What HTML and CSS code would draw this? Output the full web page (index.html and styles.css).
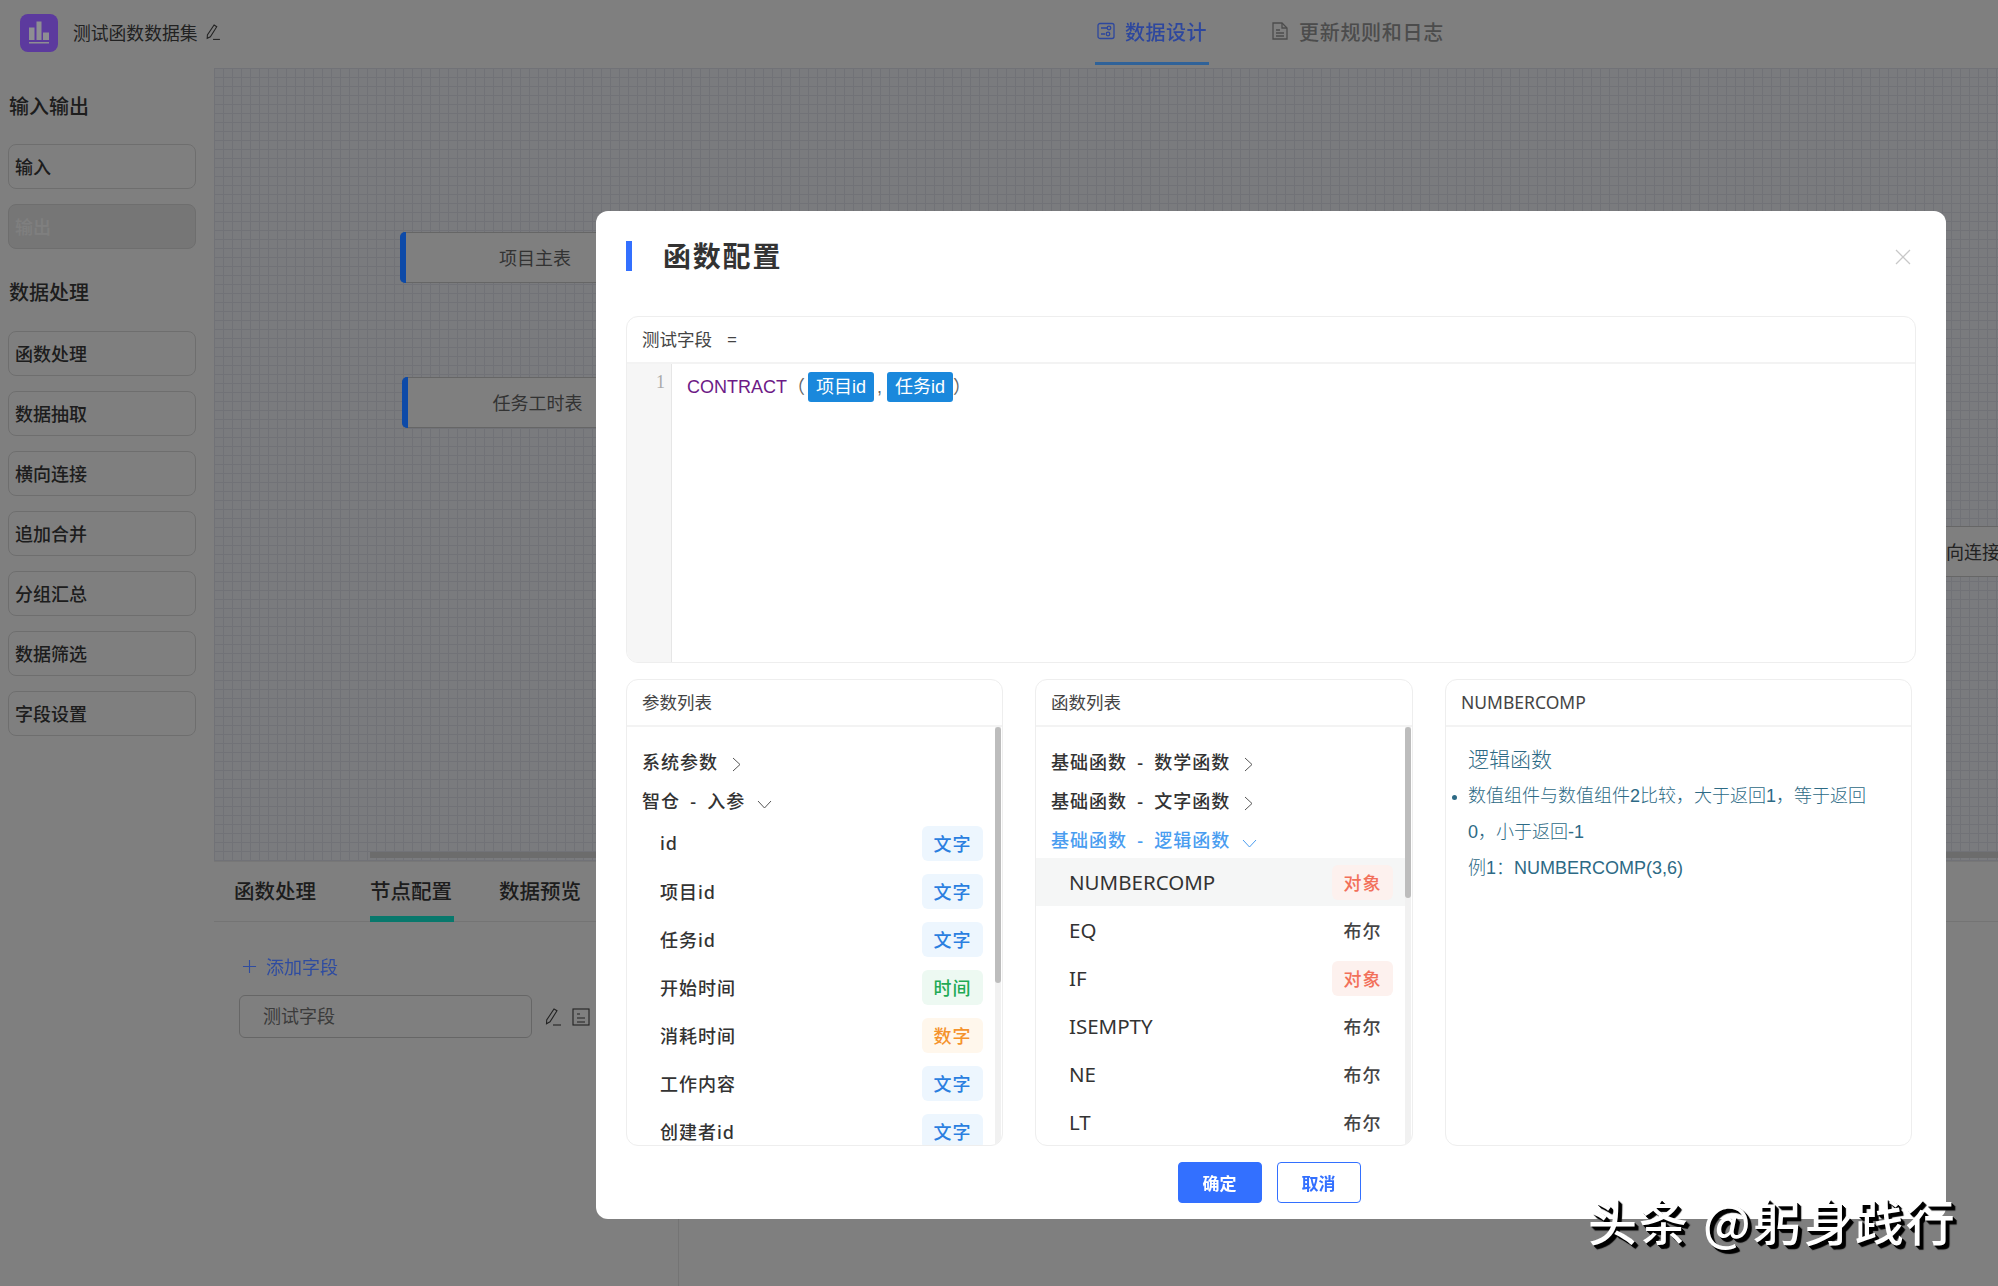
FILE: index.html
```html
<!DOCTYPE html>
<html>
<head>
    <title>函数配置</title>
    <meta charset="utf-8">
    <link rel="stylesheet" href="styles.css">
</head>
<body>
    <div class="app">
        <div class="topbar">
            <div class="brand">
                <svg class="logo" viewBox="0 0 38 38">
                    <rect width="38" height="38" rx="8" fill="#5c3a9e"/>
                    <path d="M9 13.500h5.500V26H9zM16.500 7.500h5V26h-5zM23 18.500h6V26h-6z" fill="#8e8e92"/>
                    <rect x="9" y="28" width="20" height="1.500" fill="#8e8e92"/>
                </svg>
                <span class="brand-name">测试函数数据集</span>
                <svg class="pencil" viewBox="0 0 16 16" fill="none" stroke="#444" stroke-width="1">
                    <path d="M9.500 1l2.500 1.600-6 9.400-3 1.500.2-3.300z"/>
                    <path d="M8.500 14.500h6.500"/>
                </svg>
            </div>
            <div class="nav">
                <div class="nav-tab active">
                    <svg viewBox="0 0 18 18" fill="none" stroke="#2d479e" stroke-width="1.300">
                        <rect x="1" y="1.500" width="16" height="15" rx="2"/>
                        <path d="M4 6h6M8 12h-4"/>
                        <circle cx="12" cy="6" r="1.800"/>
                        <circle cx="11" cy="12" r="1.800"/>
                    </svg>
                    <span>数据设计</span>
                </div>
                <div class="nav-tab second">
                    <svg viewBox="0 0 18 18" fill="none" stroke="#999" stroke-width="1.300">
                        <path d="M2 1h9l5 5v11H2z"/>
                        <path d="M11 1v5h5M5 8h4M5 11h8M5 14h8"/>
                    </svg>
                    <span>更新规则和日志</span>
                </div>
            </div>
        </div>

        <div class="main">
            <div class="sidebar">
                <h4>输入输出</h4>
                <div class="side-item">输入</div>
                <div class="side-item disabled">输出</div>
                <h4>数据处理</h4>
                <div class="side-item">函数处理</div>
                <div class="side-item">数据抽取</div>
                <div class="side-item">横向连接</div>
                <div class="side-item">追加合并</div>
                <div class="side-item">分组汇总</div>
                <div class="side-item">数据筛选</div>
                <div class="side-item">字段设置</div>
            </div>

            <div class="work">
                <div class="canvas">
                    <div class="node node1">项目主表</div>
                    <div class="node node2">任务工时表</div>
                    <div class="node node3">横向连接</div>
                    <div class="canvas-scroll"></div>
                </div>
                <div class="panel">
                    <div class="panel-tabs">
                        <div class="panel-tab">函数处理</div>
                        <div class="panel-tab active">节点配置</div>
                        <div class="panel-tab">数据预览</div>
                    </div>
                    <div class="panel-body">
                        <div class="add-field">
                            <svg viewBox="0 0 16 16" stroke="#2f4ca0" stroke-width="1.200"><path d="M8 1v14M1 8h14"/></svg>
                            <span>添加字段</span>
                        </div>
                        <div class="field-row">
                            <div class="field-input">测试字段</div>
                            <svg class="field-icon" viewBox="0 0 18 18" fill="none" stroke="#444" stroke-width="1.100">
                                <path d="M11 1l3 1.800-7 11-3.500 2 .2-3.800z"/>
                                <path d="M10 17h8"/>
                            </svg>
                            <svg class="field-icon" viewBox="0 0 18 18" fill="none" stroke="#444" stroke-width="1.100">
                                <rect x="1" y="1" width="16" height="16"/>
                                <path d="M5 6h3M5 10h8M5 14h8"/>
                            </svg>
                        </div>
                    </div>
                </div>
            </div>
        </div>
    </div>

    <div class="mask">
        <div class="modal">
            <div class="modal-head">
                <span class="modal-bar"></span>
                <span class="modal-title">函数配置</span>
                <svg class="modal-close" viewBox="0 0 16 16" stroke="#c8c8c8" stroke-width="1.300"><path d="M1 1l14 14M15 1L1 15"/></svg>
            </div>

            <div class="formula">
                <div class="formula-head">测试字段<span class="equals">=</span></div>
                <div class="formula-body">
                    <div class="gutter">1</div>
                    <div class="code"><span class="fn-name">CONTRACT</span>（<span class="pill first">项目id</span><span class="comma">,</span><span class="pill">任务id</span>）</div>
                </div>
            </div>

            <div class="columns">
                <div class="card params">
                    <div class="card-head">参数列表</div>
                    <div class="card-body">
                        <div class="list">
                            <div class="group">系统参数<svg class="chev" viewBox="0 0 9 15" fill="none" stroke="#555"><path d="M1 1l7 6.500L1 14"/></svg></div>
                            <div class="group">智仓 - 入参<svg class="chev-down" viewBox="0 0 15 9" fill="none" stroke="#555"><path d="M1 1l6.500 7L14 1"/></svg></div>
                            <div class="row"><span>id</span><span class="tag text">文字</span></div>
                            <div class="row"><span>项目id</span><span class="tag text">文字</span></div>
                            <div class="row"><span>任务id</span><span class="tag text">文字</span></div>
                            <div class="row"><span>开始时间</span><span class="tag time">时间</span></div>
                            <div class="row"><span>消耗时间</span><span class="tag num">数字</span></div>
                            <div class="row"><span>工作内容</span><span class="tag text">文字</span></div>
                            <div class="row"><span>创建者id</span><span class="tag text">文字</span></div>
                        </div>
                        <div class="track"><div class="thumb params-thumb"></div></div>
                    </div>
                </div>

                <div class="card funcs">
                    <div class="card-head">函数列表</div>
                    <div class="card-body">
                        <div class="list">
                            <div class="group">基础函数 - 数学函数<svg class="chev" viewBox="0 0 9 15" fill="none" stroke="#555"><path d="M1 1l7 6.500L1 14"/></svg></div>
                            <div class="group">基础函数 - 文字函数<svg class="chev" viewBox="0 0 9 15" fill="none" stroke="#555"><path d="M1 1l7 6.500L1 14"/></svg></div>
                            <div class="group open">基础函数 - 逻辑函数<svg class="chev-down" viewBox="0 0 15 9" fill="none" stroke="#4a9df0"><path d="M1 1l6.500 7L14 1"/></svg></div>
                            <div class="row active"><span>NUMBERCOMP</span><span class="tag obj">对象</span></div>
                            <div class="row"><span>EQ</span><span class="tag bool">布尔</span></div>
                            <div class="row"><span>IF</span><span class="tag obj">对象</span></div>
                            <div class="row"><span>ISEMPTY</span><span class="tag bool">布尔</span></div>
                            <div class="row"><span>NE</span><span class="tag bool">布尔</span></div>
                            <div class="row"><span>LT</span><span class="tag bool">布尔</span></div>
                        </div>
                        <div class="track"><div class="thumb funcs-thumb"></div></div>
                    </div>
                </div>

                <div class="card detail">
                    <div class="card-head">NUMBERCOMP</div>
                    <div class="detail-body">
                        <div class="detail-title">逻辑函数</div>
                        <ul>
                            <li>数值组件与数值组件2比较，大于返回1，等于返回0，小于返回-1</li>
                        </ul>
                        <p>例1：NUMBERCOMP(3,6)</p>
                    </div>
                </div>
            </div>

            <div class="modal-foot">
                <button class="btn primary">确定</button>
                <button class="btn">取消</button>
            </div>
        </div>
    </div>

    <div class="watermark">头条 @躬身践行</div>
</body>
</html>
```

FILE: styles.css
```css
*{
    margin:0;
    padding:0;
    box-sizing:border-box;
}

body{
    width:1998px;
    height:1286px;
    overflow:hidden;
    background:#fff;
    color:#444;
    font-family:"Noto Sans","Noto Sans CJK SC",sans-serif;
}

.app{
    display:flex;
    flex-direction:column;
    height:100%;
}

/* top bar */
.topbar{
    display:flex;
    height:65px;
    flex:none;
}

.brand{
    display:flex;
    align-items:center;
    width:1095px;
    padding-left:20px;
}

.logo,
.nav-tab.active,
.add-field{
    position:relative;
    z-index:2;
}

.logo{
    width:38px;
    height:38px;
}

.brand-name{
    margin:-2px 0 0 15px;
    font-size:17.800px;
}

.pencil{
    width:17px;
    height:17px;
    margin-left:7px;
}

.nav{
    display:flex;
    gap:60px;
}

.nav-tab{
    display:flex;
    align-items:center;
    gap:10px;
    height:65px;
    padding:0 2px;
    border-bottom:3px solid transparent;
    font-size:20px;
    font-weight:500;
    letter-spacing:.5px;
    color:#999;
}

.nav-tab svg{
    width:18px;
    height:18px;
}

.nav-tab.second{
    letter-spacing:.7px;
}

.nav-tab.active{
    color:#2d479e;
    border-bottom-color:#2f6299;
}

/* left column */
.main{
    display:flex;
    flex:1;
}

.sidebar{
    width:214px;
    flex:none;
    padding:0 18px 0 8px;
}

.sidebar h4{
    height:79px;
    line-height:84px;
    font-size:20px;
    font-weight:500;
    color:#3a3a3a;
    padding-left:1px;
}

.sidebar h4:nth-of-type(2){
    height:67px;
    line-height:58px;
}

.side-item{
    display:flex;
    align-items:center;
    height:45px;
    margin-bottom:15px;
    padding:0 0 2px 6px;
    border:1px solid #ddd;
    border-radius:8px;
    font-size:18px;
    font-weight:500;
    color:#3a3a3a;
}

.side-item.disabled{
    background:#ececec;
    color:#fff;
}

/* canvas */
.work{
    flex:1;
    display:flex;
    flex-direction:column;
    min-width:0;
}

.canvas{
    position:relative;
    height:796px;
    overflow:hidden;
    border-top:3px solid #fff;
    background-color:#f5f6fc;
    background-image:linear-gradient(#e3e4ee 1px,transparent 1px),linear-gradient(90deg,#e3e4ee 1px,transparent 1px);
    background-size:9px 9px;
}

.node{
    position:absolute;
    display:flex;
    align-items:center;
    justify-content:center;
    width:270px;
    height:51px;
    padding-bottom:2px;
    border:1px solid #ccc;
    border-radius:5px;
    background:#fff;
    font-size:18px;
    color:#666;
}

.node::before{
    content:"";
    position:absolute;
    z-index:2;
    left:-1px;
    top:-1px;
    bottom:-1px;
    width:6px;
    background:#0d4aa8;
    border-radius:5px 0 0 5px;
}

.node1{
    left:186px;
    top:164px;
}

.node2{
    left:188px;
    top:309px;
    width:271px;
}

.node3{
    left:1615px;
    top:458px;
    color:#444;
}

.node3::before{
    display:none;
}

.canvas-scroll{
    position:absolute;
    left:156px;
    right:0;
    bottom:3px;
    height:6px;
    background:#d8d8d8;
}

/* bottom panel */
.panel{
    flex:1;
    border-top:1px solid #eee;
}

.panel-tabs{
    display:flex;
    height:60px;
    padding-left:20px;
    gap:54px;
    border-bottom:1px solid #e8e8e8;
}

.panel-tab{
    height:60px;
    width:84px;
    line-height:58px;
    font-size:20.500px;
    font-weight:500;
    color:#3a3a3a;
}

.panel-tab.active{
    border-bottom:6px solid #10f0d8;
}

.panel-tabs .panel-tab:nth-child(2){
    margin-left:-2px;
}

.panel-tabs .panel-tab:nth-child(3){
    margin-left:-9px;
}

.panel-body{
    width:465px;
    height:100%;
    padding:31px 0 0 25px;
    border-right:1px solid #e8e8e8;
}

.add-field{
    display:flex;
    align-items:center;
    gap:9px;
    margin-left:3px;
    font-size:18px;
    color:#2f4ca0;
}

.add-field svg{
    width:15px;
    height:15px;
}

.field-row{
    display:flex;
    align-items:center;
    margin-top:16px;
    gap:11px;
}

.field-input{
    width:293px;
    height:43px;
    line-height:41px;
    padding-left:23px;
    border:1px solid #ccc;
    border-radius:6px;
    font-size:18px;
    color:#777;
}

.field-icon{
    width:18px;
    height:20px;
}

/* modal */
.mask{
    position:fixed;
    z-index:1;
    top:0;
    left:0;
    width:100%;
    height:100%;
    background:rgba(0,0,0,.5);
    display:flex;
    align-items:flex-start;
    padding:211px 0 0 596px;
}

.modal{
    width:1350px;
    height:1008px;
    background:#fff;
    border-radius:12px;
    display:flex;
    flex-direction:column;
}

.modal-head{
    display:flex;
    align-items:flex-start;
    height:105px;
    padding:30px 35px 0 30px;
    flex:none;
}

.modal-bar{
    width:6px;
    height:30px;
    background:#3370ff;
}

.modal-title{
    margin-left:31px;
    font-size:28px;
    line-height:30px;
    font-weight:700;
    letter-spacing:1.800px;
    color:#333;
}

.modal-close{
    width:16px;
    height:16px;
    margin:8px 0 0 auto;
}

.formula{
    height:347px;
    margin:0 30px;
    border:1px solid #eee;
    border-radius:12px;
    display:flex;
    flex-direction:column;
    overflow:hidden;
    flex:none;
}

.formula-head{
    height:47px;
    flex:none;
    line-height:44px;
    padding-left:15px;
    border-bottom:2px solid #f3f3f3;
    font-size:17.500px;
    color:#444;
}

.equals{
    margin-left:15px;
}

.formula-body{
    flex:1;
    display:flex;
}

.gutter{
    width:45px;
    flex:none;
    background:#f6f6f6;
    border-right:1px solid #e6e6e6;
    padding:8px 6px 0 0;
    text-align:right;
    font-family:"Liberation Serif",serif;
    font-size:18px;
    color:#aaa;
}

.code{
    padding:8px 0 0 15px;
    font-family:"Liberation Sans","Noto Sans CJK SC",sans-serif;
    font-size:18px;
    line-height:30px;
    color:#666;
}

.fn-name{
    color:#6d1a86;
}

.pill{
    display:inline-block;
    height:30px;
    padding:0 8px;
    background:#1a88dc;
    border-radius:3px;
    color:#fff;
}

.pill.first{
    margin-left:3px;
}

.comma{
    display:inline-block;
    width:13px;
    padding-left:3px;
}

.columns{
    display:flex;
    height:467px;
    margin-top:16px;
    padding-left:30px;
    flex:none;
}

.card{
    border:1px solid #eee;
    border-radius:12px;
    overflow:hidden;
    display:flex;
    flex-direction:column;
}

.params{
    width:377px;
}

.funcs{
    width:378px;
    margin-left:32px;
}

.detail{
    width:467px;
    margin-left:32px;
}

.card-head{
    height:47px;
    flex:none;
    line-height:45px;
    padding-left:15px;
    border-bottom:2px solid #f3f3f3;
    font-size:17.500px;
    color:#444;
}

.card-body{
    flex:1;
    display:flex;
    min-height:0;
    padding-right:1px;
}

.list{
    flex:1;
    padding-top:14px;
    overflow:hidden;
    letter-spacing:1px;
    color:#333;
}

.group{
    display:flex;
    align-items:center;
    height:39px;
    padding-left:15px;
    font-size:18px;
    font-weight:500;
    letter-spacing:1px;
    word-spacing:4.500px;
    white-space:pre;
}

.group.open{
    color:#4a9df0;
}

.chev{
    width:9px;
    height:15px;
    margin:8px 0 0 14px;
}

.chev-down{
    width:15px;
    height:9px;
    margin:10px 0 0 12px;
}

.row{
    display:flex;
    align-items:center;
    justify-content:space-between;
    height:48px;
    padding:0 12px 0 33px;
    font-size:18px;
    font-weight:500;
    flex:none;
}

.row.active{
    background:#f5f6f6;
}

.funcs .row span:first-child{
    font-size:20.500px;
    font-weight:400;
    letter-spacing:0;
}

.tag{
    display:flex;
    align-items:center;
    justify-content:center;
    width:61px;
    height:35px;
    border-radius:6px;
    font-weight:500;
}

.tag.text{
    background:#edf6fe;
    color:#2a7fe0;
}

.tag.time{
    background:#edf9f2;
    color:#1faa55;
}

.tag.num{
    background:#fff7ec;
    color:#f5932c;
}

.tag.obj{
    background:#fdf1ee;
    color:#f2705a;
}

.tag.bool{
    color:#444;
}

.track{
    width:6px;
    flex:none;
    background:#f1f1f1;
}

.thumb{
    background:#bdbdbd;
    border-radius:3px;
}

.params-thumb{
    height:256px;
}

.funcs-thumb{
    height:171px;
}

.detail-body{
    padding:15px 40px 0 22px;
    font-family:"Liberation Sans","Noto Sans CJK SC",sans-serif;
    font-weight:300;
    font-size:18px;
    line-height:36px;
    color:#2d6a85;
}

.detail-title{
    font-size:21px;
    line-height:36px;
}

.detail-body ul{
    list-style:disc;
}

.detail-body li::marker{
    font-size:15px;
}

.modal-foot{
    display:flex;
    justify-content:center;
    gap:15px;
    margin-top:16px;
    padding-right:4px;
}

.btn{
    width:84px;
    height:41px;
    border:1px solid #3370ff;
    border-radius:4px;
    background:#fff;
    font-family:inherit;
    font-size:17px;
    font-weight:700;
    color:#3370ff;
}

.btn.primary{
    background:#3370ff;
    color:#fff;
}

.watermark{
    position:fixed;
    z-index:3;
    left:1588px;
    top:1184px;
    font-family:"Noto Sans CJK SC",sans-serif;
    font-size:49px;
    font-weight:500;
    letter-spacing:2px;
    color:#fff;
    text-shadow:1px 1px 0 #000,2px 2px 0 #000,3px 3px 0 #000,4px 4px 1px #000;
    white-space:nowrap;
}
```
